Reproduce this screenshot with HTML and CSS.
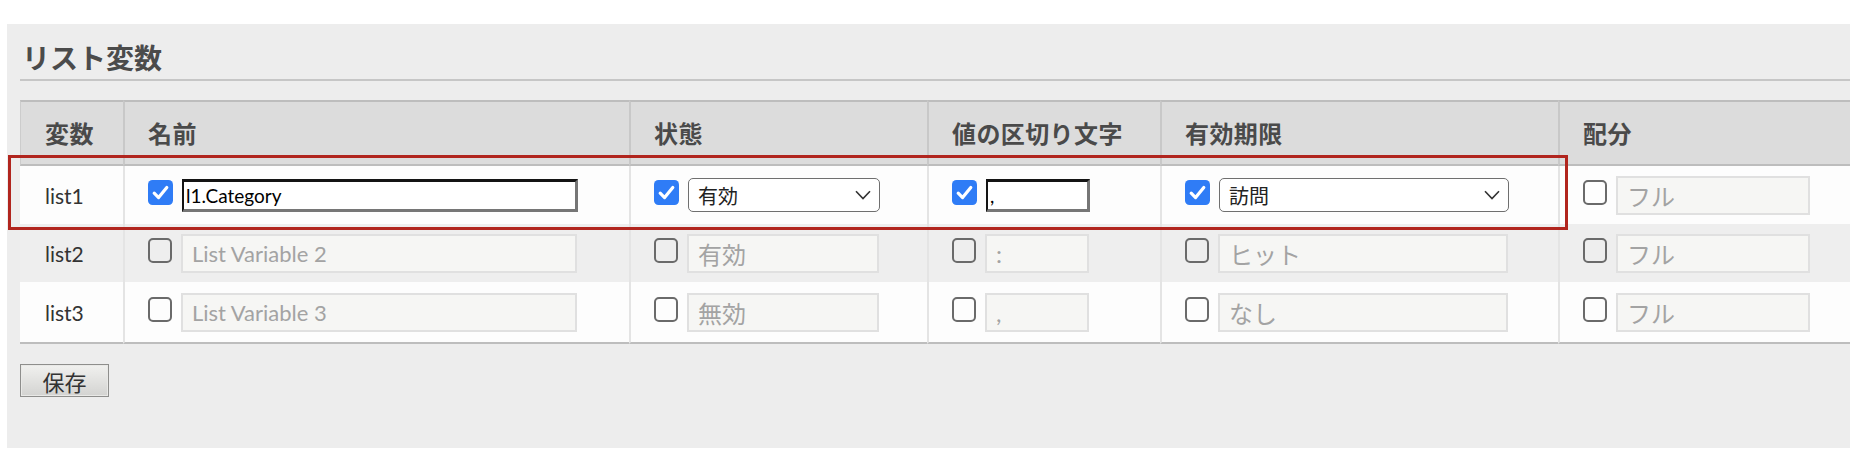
FILE: index.html
```html
<!DOCTYPE html>
<html lang="ja">
<head>
<meta charset="utf-8">
<title>リスト変数</title>
<link rel="stylesheet" href="styles.css">
</head>
<body>
<div class="panel">
  <h2 class="title">リスト変数</h2>
  <table class="vars">
    <thead>
      <tr>
        <th class="c1">変数</th>
        <th class="c2">名前</th>
        <th class="c3">状態</th>
        <th class="c4">値の区切り文字</th>
        <th class="c5">有効期限</th>
        <th class="c6">配分</th>
      </tr>
    </thead>
    <tbody>
      <tr class="r-white">
        <td class="lbl">list1</td>
        <td><div class="cell"><span class="cb on"><svg viewBox="0 0 25 25" width="25" height="25"><rect x="0" y="0" width="25" height="25" rx="4.5" fill="#2f7cf6"/><path d="M6.2 13.2 L10.6 17.6 L18.8 7.4" fill="none" stroke="#fff" stroke-width="3.2" stroke-linecap="round" stroke-linejoin="round"/></svg></span><input class="edit w-name" type="text" value="l1.Category"></div></td>
        <td><div class="cell"><span class="cb on"><svg viewBox="0 0 25 25" width="25" height="25"><rect x="0" y="0" width="25" height="25" rx="4.5" fill="#2f7cf6"/><path d="M6.2 13.2 L10.6 17.6 L18.8 7.4" fill="none" stroke="#fff" stroke-width="3.2" stroke-linecap="round" stroke-linejoin="round"/></svg></span><div class="sel w-state"><span>有効</span><svg class="chev" viewBox="0 0 16 10" width="16" height="10"><path d="M1 1.2 L8 8.6 L15 1.2" fill="none" stroke="#333" stroke-width="1.6"/></svg></div></div></td>
        <td><div class="cell"><span class="cb on"><svg viewBox="0 0 25 25" width="25" height="25"><rect x="0" y="0" width="25" height="25" rx="4.5" fill="#2f7cf6"/><path d="M6.2 13.2 L10.6 17.6 L18.8 7.4" fill="none" stroke="#fff" stroke-width="3.2" stroke-linecap="round" stroke-linejoin="round"/></svg></span><input class="edit w-delim" type="text" value=","></div></td>
        <td><div class="cell"><span class="cb on"><svg viewBox="0 0 25 25" width="25" height="25"><rect x="0" y="0" width="25" height="25" rx="4.5" fill="#2f7cf6"/><path d="M6.2 13.2 L10.6 17.6 L18.8 7.4" fill="none" stroke="#fff" stroke-width="3.2" stroke-linecap="round" stroke-linejoin="round"/></svg></span><div class="sel w-exp"><span>訪問</span><svg class="chev" viewBox="0 0 16 10" width="16" height="10"><path d="M1 1.2 L8 8.6 L15 1.2" fill="none" stroke="#333" stroke-width="1.6"/></svg></div></div></td>
        <td><div class="cell"><span class="cb off"></span><input class="dis w-alloc" type="text" value="フル" disabled></div></td>
      </tr>
      <tr class="r-gray">
        <td class="lbl">list2</td>
        <td><div class="cell"><span class="cb off"></span><input class="dis latin w-name" type="text" value="List Variable 2" disabled></div></td>
        <td><div class="cell"><span class="cb off"></span><input class="dis w-state" type="text" value="有効" disabled></div></td>
        <td><div class="cell"><span class="cb off"></span><input class="dis w-delim" type="text" value=":" disabled></div></td>
        <td><div class="cell"><span class="cb off"></span><input class="dis w-exp" type="text" value="ヒット" disabled></div></td>
        <td><div class="cell"><span class="cb off"></span><input class="dis w-alloc" type="text" value="フル" disabled></div></td>
      </tr>
      <tr class="r-white last">
        <td class="lbl">list3</td>
        <td><div class="cell"><span class="cb off"></span><input class="dis latin w-name" type="text" value="List Variable 3" disabled></div></td>
        <td><div class="cell"><span class="cb off"></span><input class="dis w-state" type="text" value="無効" disabled></div></td>
        <td><div class="cell"><span class="cb off"></span><input class="dis w-delim" type="text" value="," disabled></div></td>
        <td><div class="cell"><span class="cb off"></span><input class="dis w-exp" type="text" value="なし" disabled></div></td>
        <td><div class="cell"><span class="cb off"></span><input class="dis w-alloc" type="text" value="フル" disabled></div></td>
      </tr>
    </tbody>
  </table>
  <button class="save" type="button">保存</button>
  <div class="highlight"></div>
</div>
</body>
</html>
```

FILE: styles.css
```css
html, body {
  margin: 0;
  padding: 0;
  background: #ffffff;
}

body {
  font-family: Lato, "Noto Sans CJK JP", sans-serif;
  color: #333;
}

.panel {
  position: relative;
  margin: 24px 10px 0 7px;
  padding: 16px 0 51px 13px;
  background: #ededed;
}

.title {
  margin: 0 0 19px 0;
  padding: 0 0 5px 2px;
  font-family: "Noto Sans CJK JP", sans-serif;
  font-weight: 700;
  font-size: 28px;
  line-height: 34px;
  color: #4b4b4b;
  border-bottom: 2px solid #c6c6c6;
}

.vars {
  table-layout: fixed;
  border-collapse: separate;
  border-spacing: 0;
  width: 1830px;
}

.vars th,
.vars td {
  box-sizing: border-box;
  padding: 0 0 0 23px;
  text-align: left;
  vertical-align: middle;
}

.vars th {
  height: 66px;
  background: #dcdcdc;
  border-top: 2px solid #bdbdbd;
  border-bottom: 2px solid #bdbdbd;
  border-left: 2px solid #c8c8c8;
  font-family: "Noto Sans CJK JP", sans-serif;
  font-weight: 700;
  font-size: 24px;
  letter-spacing: 0.4px;
  line-height: 1;
  color: #4a4a4a;
}

.vars th.c1 {
  border-left: 1px solid #cccccc;
  padding-left: 24px;
}

.c1 { width: 103px; }
.c2 { width: 506px; }
.c3 { width: 298px; }
.c4 { width: 233px; }
.c5 { width: 398px; }
.c6 { width: 292px; }

.vars td {
  height: 58px;
  border-left: 2px solid #e4e4e4;
}

.vars td.lbl {
  border-left: none;
  padding-left: 25px;
  font-family: Lato, sans-serif;
  font-size: 21px;
  color: #333;
}

.r-white td { background: #fdfdfd; }
.r-gray td { background: #eeeeee; }

.last td {
  height: 62px;
  border-bottom: 2px solid #bdbdbd;
}

.cell {
  display: flex;
  align-items: center;
  gap: 9px;
}

.cb {
  flex: none;
  box-sizing: border-box;
  width: 25px;
  height: 25px;
  margin-bottom: 6px;
}

.cb svg { display: block; }

.cb.off {
  width: 24px;
  border: 2px solid #6a6a6a;
  border-radius: 5px;
  background: transparent;
}

.w-name { width: 396px; }
.w-state { width: 192px; }
.w-delim { width: 104px; }
.w-exp { width: 290px; }
.w-alloc { width: 194px; }

.edit {
  box-sizing: border-box;
  height: 33px;
  margin: 0;
  padding: 0 2px;
  font-family: Lato, sans-serif;
  font-size: 19px;
  color: #000;
  background: #fff;
  border-style: solid;
  border-width: 3px 3px 3px 2px;
  border-color: #141414 #767676 #767676 #141414;
  outline: none;
}

.dis {
  box-sizing: border-box;
  height: 39px;
  margin: 0;
  padding: 0 9px;
  font-family: Lato, "Noto Sans CJK JP", sans-serif;
  font-size: 24px;
  color: #a3a3a3;
  -webkit-text-fill-color: #a3a3a3;
  background: #f6f6f4;
  border: 2px solid #e0e0e0;
  opacity: 1;
}

.dis.latin {
  font-size: 22px;
}

.sel {
  box-sizing: border-box;
  height: 34px;
  display: flex;
  align-items: center;
  justify-content: space-between;
  padding: 0 8px 0 9px;
  background: #fff;
  border: 1px solid #6f6f6f;
  border-radius: 5px;
  font-family: "Noto Sans CJK JP", sans-serif;
  font-size: 20px;
  color: #222;
}

.chev { display: block; flex: none; }

.save {
  display: block;
  box-sizing: border-box;
  margin: 20px 0 0 0;
  width: 89px;
  height: 33px;
  padding: 0;
  font-family: "Noto Sans CJK JP", sans-serif;
  font-size: 22px;
  line-height: 1;
  color: #333;
  background: linear-gradient(#f1f1ef, #d3d3d1);
  border: 1px solid #8e8e8c;
  box-shadow: inset 0 0 0 1px #e9e9e7;
}

.highlight {
  position: absolute;
  left: 1px;
  top: 131px;
  width: 1560px;
  height: 75px;
  box-sizing: border-box;
  border: 3px solid #b1251e;
  pointer-events: none;
}
```
